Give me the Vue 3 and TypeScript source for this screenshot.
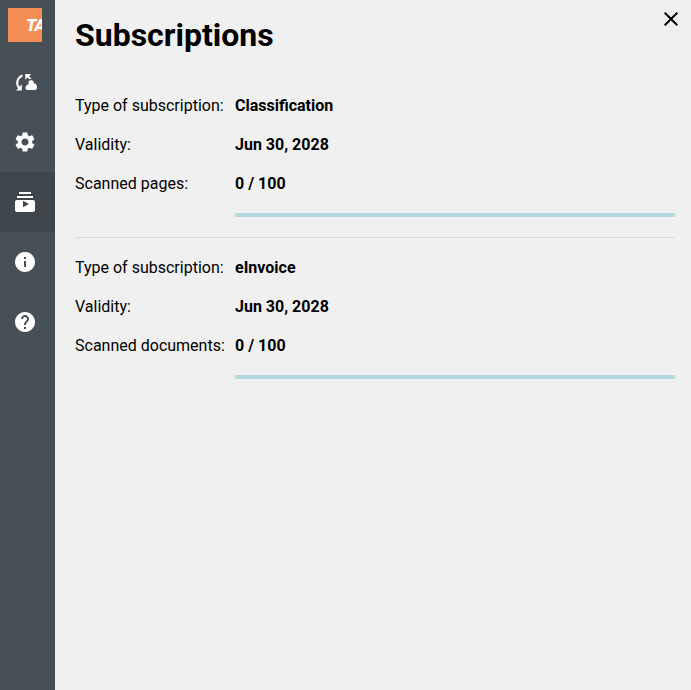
<template>
  <div class="app">
    <aside class="sidebar">
      <div class="logo"><span>TA</span></div>
      <nav class="nav">
        <button
          v-for="item in navItems"
          :key="item.name"
          class="nav-item"
          :class="{ active: item.name === activeItem }"
          type="button"
          :aria-label="item.name"
        >
          <svg viewBox="0 0 24 24" width="24" height="24" fill="#fff">
            <path v-for="(d, i) in item.paths" :key="i" :d="d" fill-rule="evenodd" />
          </svg>
        </button>
      </nav>
    </aside>

    <main class="content">
      <button class="close" type="button" aria-label="Close">
        <svg viewBox="0 0 24 24" width="24" height="24">
          <path d="M19 6.41 17.59 5 12 10.59 6.41 5 5 6.41 10.59 12 5 17.59 6.41 19 12 13.41 17.59 19 19 17.59 13.41 12z" />
        </svg>
      </button>
      <h1>Subscriptions</h1>

      <section v-for="sub in subscriptions" :key="sub.type" class="subscription">
        <div class="row">
          <span class="label">Type of subscription:</span>
          <strong>{{ sub.type }}</strong>
        </div>
        <div class="row">
          <span class="label">Validity:</span>
          <strong>{{ sub.validity }}</strong>
        </div>
        <div class="row">
          <span class="label">{{ sub.usageLabel }}:</span>
          <strong>{{ sub.used }} / {{ sub.total }}</strong>
        </div>
        <div class="progress">
          <div class="progress-bar" :style="{ width: (sub.used / sub.total) * 100 + '%' }"></div>
        </div>
      </section>
    </main>
  </div>
</template>

<script setup lang="ts">
type NavItem = { name: string; paths: string[] }
type Subscription = {
  type: string
  validity: string
  usageLabel: string
  used: number
  total: number
}

const activeItem = 'subscriptions'

const navItems: NavItem[] = [
  {
    name: 'sync',
    paths: [
      'M9.5 4.5V6.8C6.8 8 5.300 10.500 5.300 13c0 1.500.5 2.800 1.300 3.600L8.800 14.500v6H3l2.100-2.300C3.900 16.800 3.200 15 3.200 13c0-3.800 2.500-7.200 6.300-8.500z',
      'M12.300 9.800V4h6l-2.200 2.200c1 .9 1.800 1.800 2.300 2.800h-2.500c-.4-.5-.9-1-1.500-1.500z',
      'M18.300 10.200a2.400 2.400 0 0 1 2.300 2.800c1.900.2 3.400 1.800 3.400 3.800v.2c0 1.800-.8 3-2 3H14.500c-1.300 0-2-1-2-2.300 0-1.700 1.300-3 3.300-3.100-.1-.2-.1-.4-.1-.6a2.500 2.500 0 0 1 2.600-3.800z'
    ]
  },
  {
    name: 'settings',
    paths: [
      'M19.14 12.94c.04-.3.06-.61.06-.94 0-.32-.02-.64-.07-.94l2.03-1.58a.49.49 0 0 0 .12-.61l-1.92-3.32a.488.488 0 0 0-.59-.22l-2.39.96c-.5-.38-1.03-.7-1.62-.94l-.36-2.54a.484.484 0 0 0-.48-.41h-3.84c-.24 0-.43.17-.47.41l-.36 2.54c-.59.24-1.13.57-1.62.94l-2.39-.96c-.22-.08-.47 0-.59.22L2.74 8.87c-.12.21-.08.47.12.61l2.03 1.58c-.05.3-.09.63-.09.94s.02.64.07.94l-2.03 1.58a.49.49 0 0 0-.12.61l1.92 3.32c.12.22.37.29.59.22l2.39-.96c.5.38 1.03.7 1.62.94l.36 2.54c.05.24.24.41.48.41h3.84c.24 0 .44-.17.47-.41l.36-2.54c.59-.24 1.13-.56 1.62-.94l2.39.96c.22.08.47 0 .59-.22l1.92-3.32c.12-.22.07-.47-.12-.61l-2.01-1.58zM12 15.6c-1.98 0-3.6-1.62-3.6-3.6s1.62-3.6 3.6-3.6 3.6 1.62 3.6 3.6-1.62 3.6-3.6 3.6z'
    ]
  },
  {
    name: 'subscriptions',
    paths: [
      'M20 8H4V6h16v2zm-2-6H6v2h12V2zm4 12v6c0 1.1-.9 2-2 2H4c-1.1 0-2-.9-2-2v-8c0-1.1.9-2 2-2h16c1.1 0 2 .9 2 2v2zm-6 0-6-3.27v6.53L16 14z'
    ]
  },
  {
    name: 'info',
    paths: [
      'M12 2C6.48 2 2 6.48 2 12s4.48 10 10 10 10-4.48 10-10S17.52 2 12 2zm1 15h-2v-6h2v6zm0-8h-2V7h2v2z'
    ]
  },
  {
    name: 'help',
    paths: [
      'M12 2C6.48 2 2 6.48 2 12s4.48 10 10 10 10-4.48 10-10S17.52 2 12 2zm1 17h-2v-2h2v2zm2.07-7.75-.9.92C13.45 12.9 13 13.5 13 15h-2v-.5c0-1.1.45-2.1 1.17-2.83l1.24-1.26c.37-.36.59-.86.59-1.41 0-1.1-.9-2-2-2s-2 .9-2 2H8c0-2.21 1.79-4 4-4s4 1.79 4 4c0 .88-.36 1.68-.93 2.25z'
    ]
  }
]

const subscriptions: Subscription[] = [
  { type: 'Classification', validity: 'Jun 30, 2028', usageLabel: 'Scanned pages', used: 0, total: 100 },
  { type: 'eInvoice', validity: 'Jun 30, 2028', usageLabel: 'Scanned documents', used: 0, total: 100 }
]
</script>

<style>
html,
body {
  margin: 0;
  background: #f0f0f0;
}
</style>

<style scoped>
.app {
  display: flex;
  height: 690px;
  overflow: hidden;
  background: #f0f0f0;
  color: #000;
  font-family: Roboto, "Liberation Sans", sans-serif;
  font-size: 16px;
}

.sidebar {
  flex: 0 0 55px;
  background: #474f57;
}

.logo {
  width: 34px;
  height: 34px;
  margin: 8px 0 10px 8px;
  background: #f58f55;
  overflow: hidden;
  display: flex;
  align-items: center;
}
.logo span {
  padding-left: 18px;
  color: #fff;
  font-size: 17px;
  font-weight: 900;
  font-style: italic;
  letter-spacing: -1px;
  white-space: nowrap;
}

.nav {
  display: flex;
  flex-direction: column;
}
.nav-item {
  height: 60px;
  padding: 0 0 0 13px;
  border: none;
  background: transparent;
  display: flex;
  align-items: center;
  cursor: pointer;
}
.nav-item.active {
  background: #3e454b;
}

.content {
  position: relative;
  flex: 1;
  padding: 0 16px 0 20px;
  min-width: 0;
}

.close {
  position: absolute;
  top: 7px;
  right: 8px;
  padding: 0;
  border: none;
  background: transparent;
  cursor: pointer;
  display: flex;
}

h1 {
  margin: 0;
  padding-top: 14px;
  height: 72px;
  box-sizing: border-box;
  font-size: 32px;
  line-height: 42px;
  font-weight: 700;
}

.subscription {
  padding-top: 14px;
  padding-bottom: 20px;
}
.subscription + .subscription {
  border-top: 1px solid #d9d9d9;
  padding-top: 10px;
}

.row {
  display: flex;
  align-items: center;
  height: 39px;
  line-height: 19px;
}
.label {
  flex: 0 0 160px;
  white-space: nowrap;
}
.row strong {
  font-weight: 700;
}

.progress {
  height: 4px;
  margin: 10px 0 0 160px;
  background: #b2d9e0;
}
.progress-bar {
  height: 100%;
  background: #1a8fa3;
}
</style>
